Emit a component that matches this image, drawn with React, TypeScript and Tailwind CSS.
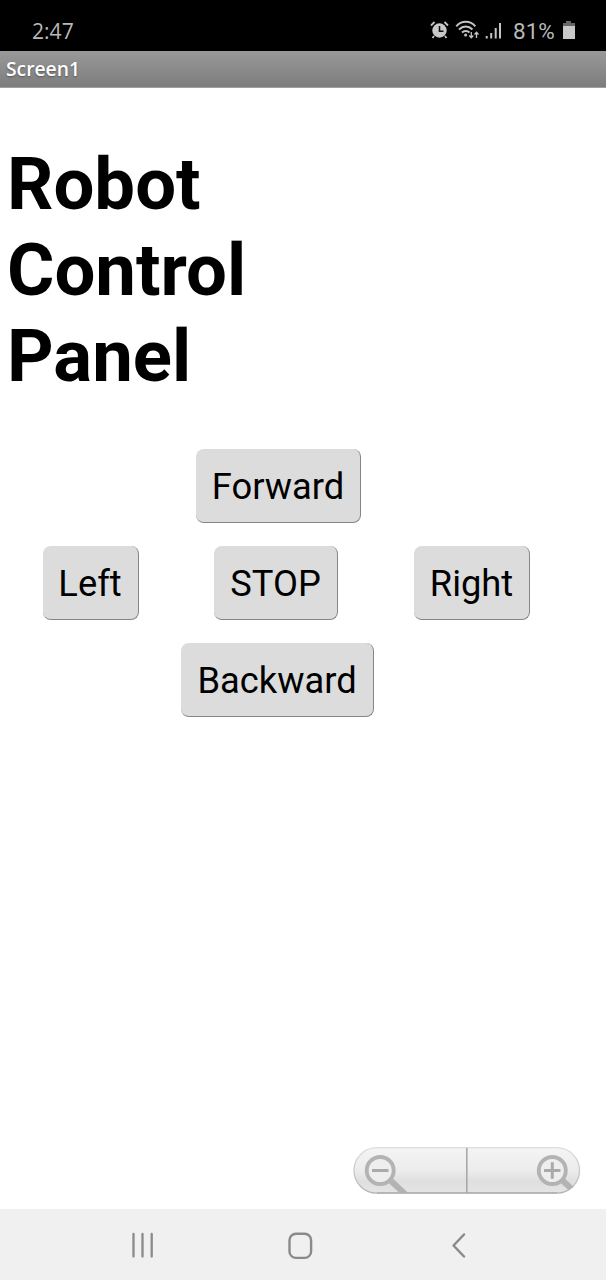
import type { ReactNode } from "react";

function StatusBar() {
  return (
    <div className="flex h-[51px] shrink-0 items-start bg-black pl-8 pt-5 font-['Open_Sans','Noto_Sans',sans-serif] text-[#b9b9b9]">
      <span className="-mt-px h-6 w-[44px] origin-left scale-x-[0.98] text-[21.500px] leading-[23px]">2:47</span>
      <svg className="ml-[354px] h-6 w-[76px] shrink-0" viewBox="0 0 76 24" fill="none" stroke="#c4c4c4">
        <circle cx="9.500" cy="10.500" r="7.200" fill="#c8c8c8" stroke="none" />
        <path d="M1 5.500 4.500 2M18 5.500 14.500 2M4 16 2.500 18M15 16l1.500 2" strokeWidth="1.800" />
        <path d="M9.500 6v5.200h4" stroke="#111" strokeWidth="1.600" />
        <path d="M26.300 6.300c5-6 14-6 19 0M29 9.500c4-4 9.500-4 13.500 0M32 12.500c2-2 5.500-2 7.500 0" strokeWidth="2" />
        <circle cx="35.600" cy="15" r="1.500" fill="#c4c4c4" stroke="none" />
        <path d="M41.300 12v5.500M39.300 15.500l2 2.200 2-2.200M46.500 18v-5.500M44.500 14.500l2-2.200 2 2.200" strokeWidth="1.300" />
        <path d="M56.700 16v2.500M61.200 13v5.500M65.700 8v10.500M70 3v15.500" strokeWidth="2" />
      </svg>
      <span className="-mt-px ml-[7px] w-[43px] whitespace-nowrap font-[Roboto,sans-serif] text-[22.500px] leading-[24px]">81%</span>
      <svg className="ml-[6px] h-5 w-[14px] shrink-0" viewBox="0 0 14 20">
        <path d="M4 1h5v2h4v3H1V3h3z" fill="#666" />
        <path d="M1 6h12v13H1z" fill="#c8c8c8" />
      </svg>
    </div>
  );
}

function PadButton({ children, className = "" }: { children: ReactNode; className?: string }) {
  return (
    <button
      className={`h-[74px] justify-self-center whitespace-nowrap rounded-[8px] border-r-[1.500px] border-b-[1.500px] border-[#858585] bg-[#dcdcdc] pt-[2px] text-center text-[36.300px] leading-[71px] text-black ${className}`}
    >
      {children}
    </button>
  );
}

function ZoomControls() {
  return (
    <svg className="h-12 w-[228px]" viewBox="0 0 228 48" fill="none">
      <defs>
        <linearGradient id="pill" x1="0" y1="0" x2="0" y2="1">
          <stop offset="0" stopColor="#f4f4f4" />
          <stop offset="0.500" stopColor="#ececec" />
          <stop offset="0.740" stopColor="#dfdfdf" />
          <stop offset="1" stopColor="#e5e5e5" />
        </linearGradient>
        <linearGradient id="rim" x1="0" y1="0" x2="0" y2="1">
          <stop offset="0" stopColor="#dddddd" />
          <stop offset="1" stopColor="#b4b4b4" />
        </linearGradient>
        <clipPath id="inside">
          <rect x="1" y="0.500" width="226" height="45.500" rx="22.500" />
        </clipPath>
      </defs>
      <rect x="1" y="0.700" width="225.500" height="45.500" rx="22.700" fill="url(#pill)" stroke="url(#rim)" strokeWidth="1.300" />
      <path d="M24 45.900h180" stroke="#b5b5b5" strokeWidth="1.600" />
      <path d="M113.800 1v45" stroke="#a8a8a8" strokeWidth="1.600" />
      <g clipPath="url(#inside)" stroke="#b3b3b3">
        <circle cx="27.200" cy="23.500" r="13.500" fill="#eeeeee" strokeWidth="3.900" />
        <path d="m37 33 16 15" strokeWidth="6" />
        <path d="M19 23.500h16.500" stroke="#aaa" strokeWidth="3" />
        <circle cx="199.300" cy="23.500" r="13.500" fill="#eeeeee" strokeWidth="3.900" />
        <path d="m209 33 16 15" strokeWidth="6" />
        <path d="M191 23.500h16.500M199.300 15.300v16.500" stroke="#aaa" strokeWidth="3" />
      </g>
    </svg>
  );
}

function NavigationBar() {
  return (
    <nav className="flex h-[71px] shrink-0 items-center bg-[#f0f0f0] pl-[128px]">
      <svg className="h-[30px] w-[30px]" viewBox="0 0 30 30" stroke="#8a8a8a" strokeWidth="2.300" strokeLinecap="round">
        <path d="M5.500 4v22.500M14.500 4v22.500M23.700 4v22.500" />
      </svg>
      <svg className="ml-[127px] h-[30px] w-[30px]" viewBox="0 0 30 30" fill="none" stroke="#8a8a8a" strokeWidth="2.400">
        <rect x="4.500" y="3.700" width="21.600" height="24.200" rx="6.500" />
      </svg>
      <svg className="ml-[129px] h-[30px] w-[30px]" viewBox="0 0 30 30" fill="none" stroke="#8a8a8a" strokeWidth="2.500" strokeLinecap="round" strokeLinejoin="round">
        <path d="M20 4.500 9.500 15.500 20 26.500" />
      </svg>
    </nav>
  );
}

export default function App() {
  return (
    <div className="flex h-[1280px] w-[606px] flex-col overflow-hidden bg-white font-[Roboto,sans-serif]">
      <StatusBar />
      <header className="h-[37px] shrink-0 border-b border-[#a0a0a0] bg-linear-to-b from-[#999999] to-[#7d7d7d] pl-[6px] font-['Open_Sans','Noto_Sans',sans-serif] text-[20.500px] font-semibold leading-[35px] text-white">
        <span className="inline-block origin-left scale-x-[0.940] [text-shadow:0_1px_2px_#555]">Screen1</span>
      </header>
      <main className="flex flex-1 flex-col">
        <h1 className="mt-[54px] pl-[7px] text-[72.500px] font-bold leading-[86px] text-black">
          Robot
          <br />
          Control
          <br />
          Panel
        </h1>
        <div className="mt-[49px] grid grid-cols-[181px_193px_196px] gap-y-[23px]">
          <PadButton className="col-start-2 ml-[2px] w-[165px]">Forward</PadButton>
          <PadButton className="col-start-1 w-[96px]">Left</PadButton>
          <PadButton className="mr-[3px] w-[124px]">STOP</PadButton>
          <PadButton className="w-[116px]">Right</PadButton>
          <PadButton className="col-start-2 w-[193px]">Backward</PadButton>
        </div>
        <div className="mt-auto flex justify-end pb-[14px] pr-[25px]">
          <ZoomControls />
        </div>
      </main>
      <NavigationBar />
    </div>
  );
}
